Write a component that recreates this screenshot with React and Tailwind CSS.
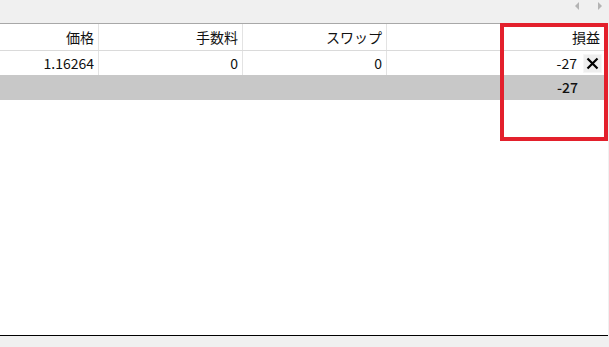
import React from "react";

const cell = "flex items-center justify-end pr-[4px] border-r border-[#e3e3e3]";

const App = () => {
  return (
    <div className="relative w-[609px] h-[347px] bg-[#f0f0f0] flex flex-col overflow-hidden font-['Noto_Sans_CJK_JP',sans-serif] text-[14px] text-[#111]">
      {/* top strip with scroll arrows */}
      <div className="h-[23px] flex items-start justify-end gap-[17px] pr-[7px] pt-[2px]">
        <svg width="5" height="8" viewBox="0 0 5 8"><path d="M4 0 L0 4 L4 8 Z" fill="#b4b4b4" /></svg>
        <svg width="5" height="8" viewBox="0 0 5 8"><path d="M1 0 L5 4 L1 8 Z" fill="#b4b4b4" /></svg>
      </div>

      {/* table */}
      <div className="flex-1 flex flex-col bg-white border-t border-[#a8a8a8] border-b border-b-black mr-[1px]">
        <div className="h-[27px] flex border-b border-[#dadada]">
          <div className={`${cell} w-[99px]`}>価格</div>
          <div className={`${cell} w-[144px]`}>手数料</div>
          <div className={`${cell} w-[144px]`}>スワップ</div>
          <div className="flex-1 flex items-center justify-end pr-[8px]">損益</div>
        </div>
        <div className="h-[24px] flex">
          <div className={`${cell} w-[99px]`}>1.16264</div>
          <div className={`${cell} w-[144px]`}>0</div>
          <div className={`${cell} w-[144px]`}>0</div>
          <div className="flex-1 flex items-center justify-end gap-[6px] pr-[6px]">
            <span>-27</span>
            <div className="w-[19px] h-[19px] bg-[#eeeeee] border border-[#f6f6f6] flex items-center justify-center">
              <svg width="13" height="13" viewBox="0 0 13 13">
                <path d="M1.5 1.5 L11.5 11.5 M11.5 1.5 L1.5 11.5" stroke="#000" strokeWidth="2.2" />
              </svg>
            </div>
          </div>
        </div>
        <div className="h-[25px] flex bg-[#c8c8c8]">
          <div className="flex-1 flex items-center justify-end pr-[30px] font-medium">-27</div>
        </div>
        <div className="flex-1" />
      </div>

      <div className="h-[11px]" />

      {/* highlight */}
      <div className="absolute left-[500px] top-[23px] w-[108px] h-[118px] border-4 border-[#e3202c]" />
    </div>
  );
};

export default App;
